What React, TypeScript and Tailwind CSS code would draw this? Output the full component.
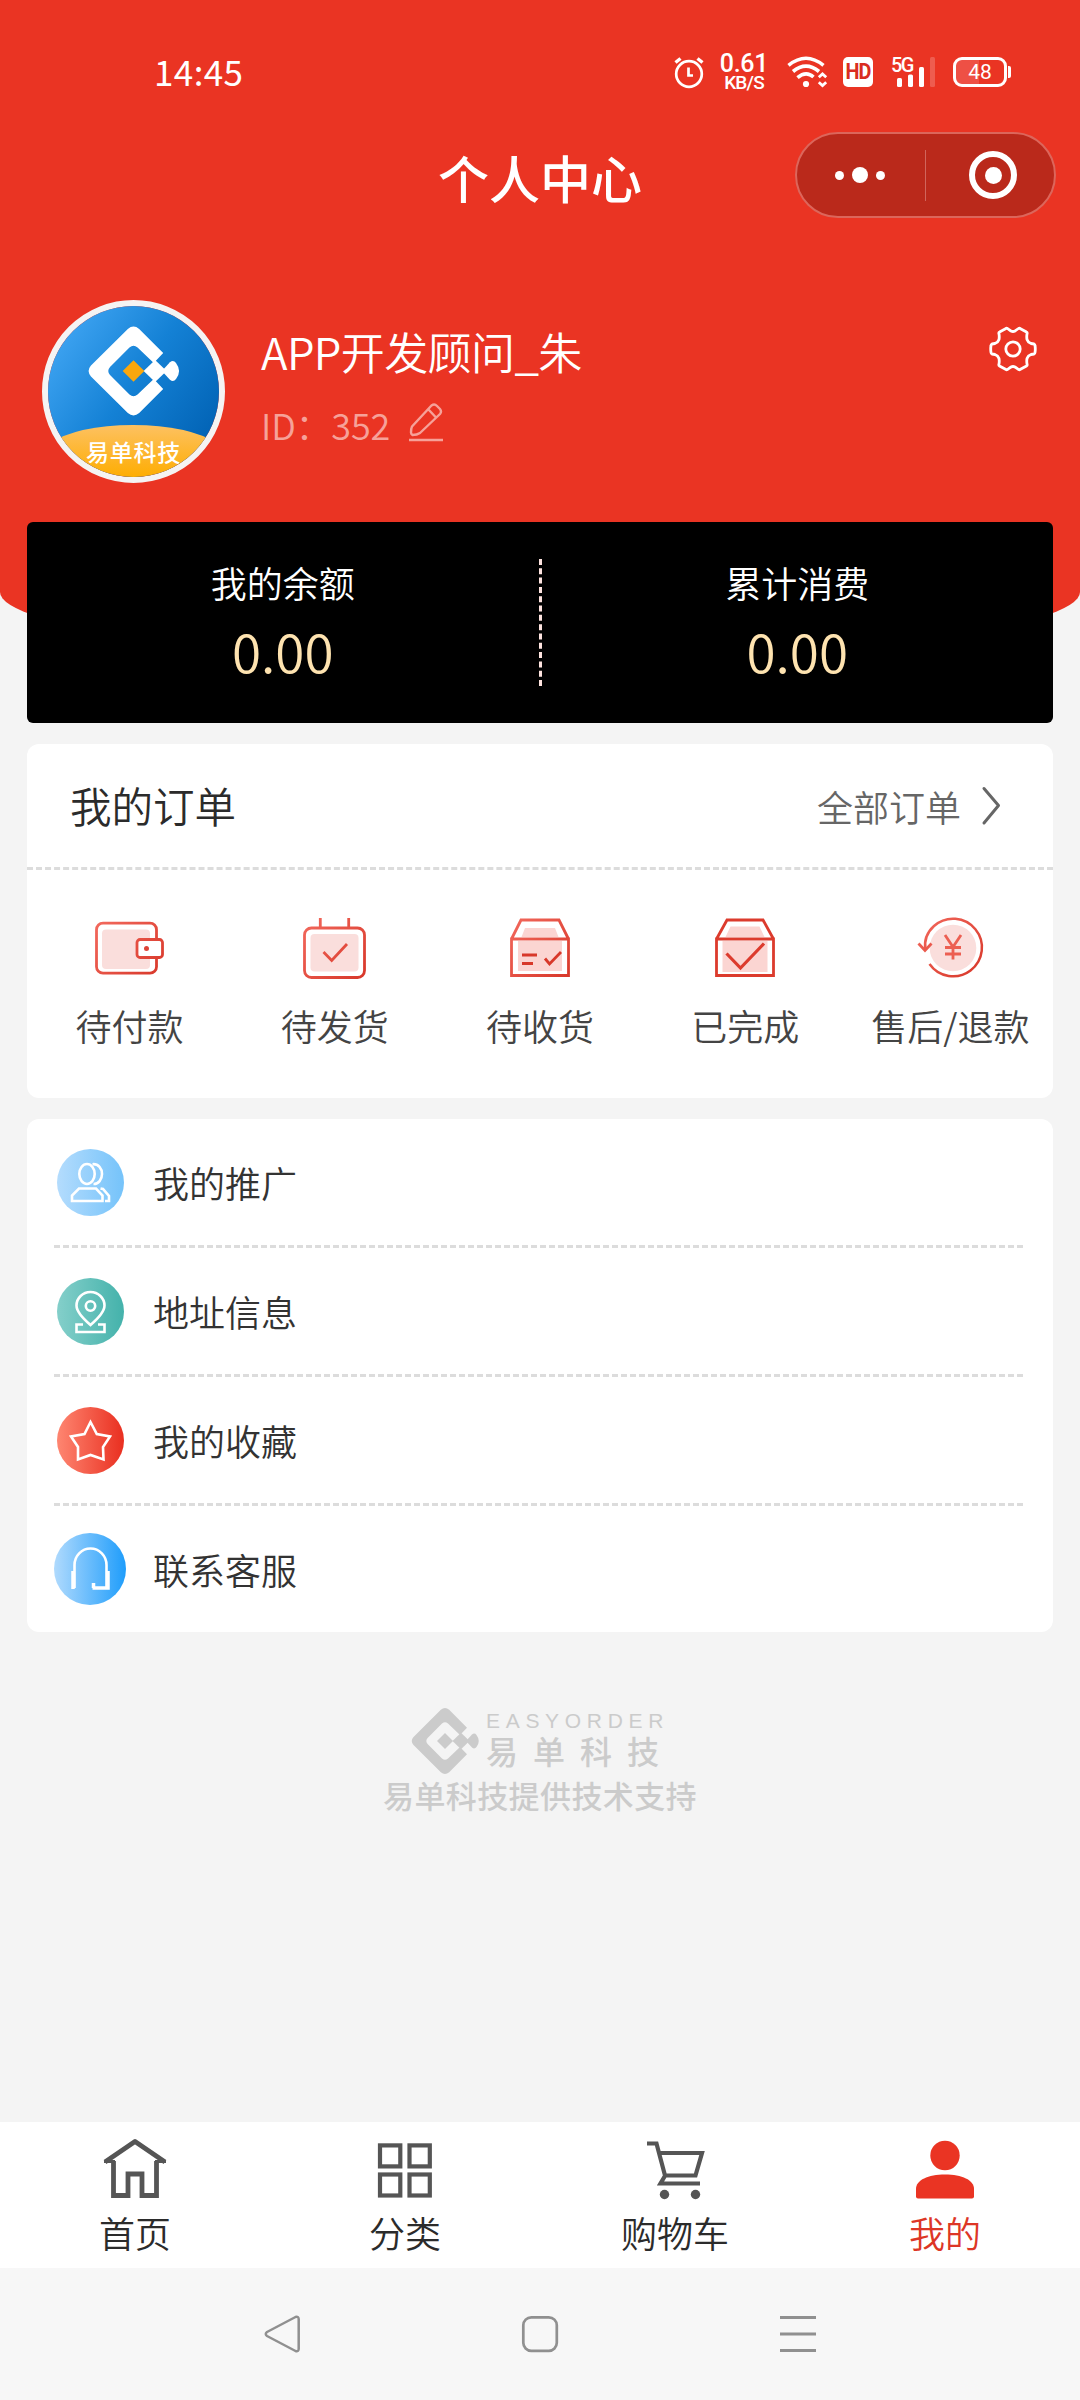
import React from "react";

const SANS = "font-['Noto_Sans_CJK_SC','Noto_Sans',sans-serif] font-[350]";

function BrandMark({ core }: { core: string }) {
  return (
    <>
      <path
        fill="currentColor"
        d="M22-13.3 4.2-31.2Q0-34.8-4.2-31.2L-31.5-4Q-35 0-31.5 4L-4.2 31.2Q0 34.8 4.2 31.2L22 13.3 15 6 3 17.4Q0 20 -3 17.4L-17.4 3Q-20 0-17.4-3L-3-17.4Q0-20 3-17.4L15-6Z"
      />
      <path fill="currentColor" d="M7.5 0 16-8.2 24.5 0 16 8.2Z" />
      <path fill="currentColor" d="M21 0 27-6.5Q29.500-8.600 31.500-6 36 0 31.500 6 29.500 8.600 27 6.500Z" />
      <path fill={core} d="M-8 0 0-8 8 0 0 8Z" />
    </>
  );
}

function StatusBar() {
  return (
    <div className="flex h-[132px] items-start justify-between pl-[154px] pr-[69px] pt-[53px] text-white">
      <span className="mt-[-1px] font-['Noto_Sans_CJK_SC'] text-[35px] font-normal leading-[38px] tracking-[0.4px]">14:45</span>
      <div className="flex h-[38px] items-center">
        <svg width="30" height="34" viewBox="0 0 30 34" fill="none" stroke="#fff">
          <circle cx="15" cy="19" r="12.8" strokeWidth="2.7" />
          <path d="M14.500 12.500V20.500H19" strokeWidth="2.7" />
          <path d="M1.500 7.500 6.500 3.500M28.500 7.500 23.500 3.500" strokeWidth="3.4" />
        </svg>
        <div className="ml-[17px] flex w-[46px] flex-col items-center font-['Roboto'] font-medium">
          <span className="text-[25px] leading-[20px] tracking-[-0.3px]">0.61</span>
          <span className="text-[19px] leading-[17px] tracking-[-0.8px]">KB/S</span>
        </div>
        <svg className="ml-[20px]" width="41" height="32" viewBox="0 0 41 32" fill="none" stroke="#fff" strokeWidth="3.6">
          <path d="M1.500 9.300Q19-4.800 36.500 9.300" />
          <path d="M6 15.500Q19 4.600 32 15.500" />
          <path d="M10.500 21.700Q19 14.400 26.500 21" />
          <circle cx="19" cy="28" r="3.100" fill="#fff" stroke="none" />
          <path d="M31.800 21.300 35.500 18 39.200 21.300M31.800 26.300 35.500 29.600 39.200 26.300" strokeWidth="2.8" />
        </svg>
        <div className="ml-[15px] flex h-[30px] w-[30px] items-center justify-center rounded-[5px] bg-white font-['Roboto'] text-[22px] font-bold leading-none tracking-[-1px] text-[#d92d20]">
          <span className="scale-x-[0.9]">HD</span>
        </div>
        <div className="relative ml-[18px] h-[30px] w-[46px]">
          <span className="absolute left-0 top-[-1px] font-['Roboto'] text-[20px] font-medium leading-[18px] tracking-[-1.5px]">5G</span>
          <svg className="absolute left-0 top-0" width="46" height="30" viewBox="0 0 46 30" fill="#fff">
            <rect x="6" y="21" width="5" height="9" rx="1.500" />
            <rect x="17" y="17.500" width="5" height="12.500" rx="1.500" />
            <rect x="28" y="10" width="5" height="20" rx="1.500" />
            <rect x="39" y="0" width="5" height="30" rx="1.500" opacity=".2" />
          </svg>
        </div>
        <div className="ml-[16px] flex items-center">
          <div className="flex h-[30px] w-[54px] items-center justify-center rounded-[9px] border-[3px] border-white bg-[linear-gradient(90deg,#ee5045_48%,transparent_48%)] font-['Roboto'] text-[21px] font-normal leading-none">
            48
          </div>
          <div className="ml-[1px] h-[12px] w-[3px] rounded-r-[2px] bg-white" />
        </div>
      </div>
    </div>
  );
}

function TitleBar() {
  return (
    <div className="relative flex h-[86px] items-center justify-center">
      <h1 className="pt-[3px] text-[51px] font-medium leading-[60px] text-white">个人中心</h1>
      <div className="absolute right-[24px] top-0 flex h-[86px] w-[261px] items-center rounded-full border-[2px] border-[#dc665b] bg-[#ba291b]">
        <div className="flex w-[128px] items-center justify-center gap-[8px] pr-[2px]">
          <i className="h-[9px] w-[9px] rounded-full bg-white" />
          <i className="h-[16px] w-[16px] rounded-full bg-white" />
          <i className="h-[9px] w-[9px] rounded-full bg-white" />
        </div>
        <div className="h-[51px] w-px bg-[#d0655c]" />
        <div className="flex flex-1 items-center justify-center pl-[6px]">
          <div className="flex h-[48px] w-[48px] items-center justify-center rounded-full border-[6px] border-white">
            <i className="h-[17px] w-[17px] rounded-full bg-white" />
          </div>
        </div>
      </div>
    </div>
  );
}

function Profile() {
  return (
    <div className="flex pl-[42px] pr-[43px] pt-[82px]">
      <div className="h-[183px] w-[183px] shrink-0 overflow-hidden rounded-full border-[6px] border-[#f5f3f3]">
        <svg width="171" height="171" viewBox="0 0 171 171">
          <defs>
            <linearGradient id="sky" x1="0" y1=".1" x2="1" y2=".8">
              <stop offset="0" stopColor="#45a9f6" />
              <stop offset=".5" stopColor="#1481d5" />
              <stop offset="1" stopColor="#0060b2" />
            </linearGradient>
            <linearGradient id="sun" x1="0" y1="0" x2="0" y2="1">
              <stop offset="0" stopColor="#fdc161" />
              <stop offset="1" stopColor="#fead02" />
            </linearGradient>
          </defs>
          <rect width="171" height="171" fill="url(#sky)" />
          <path d="M0 138Q30 119 85 119T171 138V171H0Z" fill="url(#sun)" />
          <g transform="translate(85.500 65) scale(1.350)" className="text-white">
            <BrandMark core="#fba70c" />
          </g>
          <text x="85.500" y="155" textAnchor="middle" fontSize="23" fontWeight="500" letterSpacing="0.700" fill="#fff">
            易单科技
          </text>
        </svg>
      </div>
      <div className="ml-[36px] flex flex-1 flex-col pt-[18px]">
        <span className="text-[44px] leading-[66px] tracking-[-0.6px] text-white">APP开发顾问_朱</span>
        <div className="flex items-center pt-[4px] text-[36px] leading-[72px] text-[#f6a199]">
          <span className="tracking-[-0.2px]">ID：352</span>
          <svg className="mb-[5px] ml-[18px]" width="36" height="40" viewBox="0 0 36 40" fill="none" stroke="currentColor" strokeWidth="2.400" strokeLinejoin="round">
            <path d="M4 24.500 23.500 3.500Q26.500 1.500 29 4L32 7Q34 9.500 32 12L12 31Q9 33 4.500 33 3 32 3 30.500 3 26.500 4 24.500ZM20.500 7.500 28 15.500" />
            <path d="M1 38H35" />
          </svg>
        </div>
      </div>
      <svg className="mr-[-1px] mt-[25px]" width="50" height="48" viewBox="-25 -24 50 48" fill="none" stroke="#fff" strokeWidth="2.800" strokeLinejoin="round">
        <path d="M-7-20.500Q-6.500-21-5.500-20.500Q-3.500-19-2-18 0-17 2-18 3.500-19 5.500-20.500 6.500-21 7-20.500L13.500-17Q14.500-16.500 14-15 13.500-12 14-9.500 15-6.500 18-5.500L21-5Q22-4.500 22-3.500 22.600 0 22 3.500 22 4.500 21 5L18 5.500Q15 6.500 14 9.500 13.500 12 14 15 14.500 16.500 13.500 17L7 20.500Q6.500 21 5.500 20.500 3.500 19 2 18 0 17-2 18-3.500 19-5.500 20.500-6.500 21-7 20.500L-13.500 17Q-14.500 16.500-14 15-13.500 12-14 9.500-15 6.500-18 5.500L-21 5Q-22 4.500-22 3.500-22.600 0-22-3.500-22-4.500-21-5L-18-5.500Q-15-6.500-14-9.500-13.500-12-14-15-14.500-16.500-13.500-17Z" />
        <circle r="7.200" />
      </svg>
    </div>
  );
}

function Balance({ label, value }: { label: string; value: string }) {
  return (
    <div className="flex flex-1 flex-col items-center pt-[38px]">
      <span className="text-[36px] leading-[44px] text-white">{label}</span>
      <span className="mt-[13px] text-[53px] leading-[66px] text-[#fee3b0]">{value}</span>
    </div>
  );
}

const line = { fill: "none", stroke: "url(#coral)", strokeWidth: 2.8 } as const;

function OrderIcon({ children }: { children: React.ReactNode }) {
  return (
    <svg width="72" height="64" viewBox="-36 -32 72 64">
      <defs>
        <linearGradient id="coral" gradientUnits="userSpaceOnUse" x1="-30" y1="-28" x2="30" y2="28">
          <stop offset="0" stopColor="#f2685c" />
          <stop offset="1" stopColor="#d8382a" />
        </linearGradient>
      </defs>
      {children}
    </svg>
  );
}

const orders = [
  {
    name: "待付款",
    icon: (
      <OrderIcon>
        <rect x="-28" y="-18.500" width="48" height="39.500" rx="4" fill="#fadedc" />
        <rect x="-33.500" y="-24.800" width="60" height="50" rx="6.500" {...line} />
        <rect x="7" y="-8.500" width="25.500" height="18" rx="3" {...line} fill="#fff" />
        <circle cx="16.500" cy="0.500" r="2.500" fill="#dd4437" />
      </OrderIcon>
    ),
  },
  {
    name: "待发货",
    icon: (
      <OrderIcon>
        <rect x="-24.500" y="-14" width="48" height="37.500" rx="4" fill="#fadedc" />
        <rect x="-30.500" y="-20" width="60" height="49.500" rx="7" {...line} />
        <path d="M-14.700-21V-30M13.700-21V-30M-11.500 4-3.300 12.500 12-4" {...line} />
      </OrderIcon>
    ),
  },
  {
    name: "待收货",
    icon: (
      <OrderIcon>
        <path d="M-18.500-11-15-20H15L18.500-11ZM-22-7H22V23H-22Z" fill="#fbd5d2" />
        <path d="M-28.500-9H28.500V27.500H-28.500ZM-28.500-9-19-28H19L28.500-9" {...line} />
        <path d="M-18 7H-3M-18 15.500H-7M5 10.500 9.500 16 21 4" {...line} stroke="#d8382a" />
      </OrderIcon>
    ),
  },
  {
    name: "已完成",
    icon: (
      <OrderIcon>
        <path d="M-19.500-11-14.500-21.500H14.500L19.500-11ZM-22.500-7H22.500V24H-22.500Z" fill="#fbd5d2" />
        <path d="M-28.500-9H28.500V27.500H-28.500ZM-28.500-9-18-28H18L28.500-9" {...line} stroke="#dc3b2d" />
        <path d="M-18.500 5.500-4.500 20 19-4.500" {...line} stroke="#dc3b2d" strokeWidth="3.200" />
      </OrderIcon>
    ),
  },
  {
    name: "售后/退款",
    icon: (
      <OrderIcon>
        <circle cx="3" r="23.300" fill="#fadedc" />
        <path d="M-24.500 2Q-27-12-16-22A28.800 28.800 0 1 1-20.500 16" {...line} strokeWidth="2.500" />
        <path d="M-31.500-4.500-25 2.500-18.500-4.500" {...line} />
        <path d="M-5-13 3-1 11-13M3-1V11.500M-5-.5H11M-5 6H11" {...line} stroke="#ec5f52" />
      </OrderIcon>
    ),
  },
];

function Orders() {
  return (
    <section className="mt-[21px] h-[354px] rounded-[12px] bg-white">
      <div className="flex h-[126px] items-center justify-between border-b-[3px] border-dashed border-[#dcdcdc] pl-[43px] pr-[50px]">
        <h2 className="mt-[-2px] text-[41.500px] leading-[50px] text-[#2b2b2b]">我的订单</h2>
        <div className="flex items-center">
          <span className="text-[36px] leading-[44px] text-[#666]">全部订单</span>
          <svg className="ml-[20px]" width="22" height="40" viewBox="0 0 22 40" fill="none" stroke="#666" strokeWidth="3" strokeLinecap="round" strokeLinejoin="round">
            <path d="M3 2.500 17.500 19.500 3 37" />
          </svg>
        </div>
      </div>
      <div className="grid grid-cols-5 pt-[46px]">
        {orders.map((o) => (
          <div key={o.name} className="flex flex-col items-center">
            {o.icon}
            <span className="mt-[23px] whitespace-nowrap text-[36px] leading-[44px] text-[#444]">{o.name}</span>
          </div>
        ))}
      </div>
    </section>
  );
}

function Disc({ id, from, to, size, children }: { id: string; from: string; to: string; size: number; children: React.ReactNode }) {
  return (
    <svg width={size} height={size} viewBox={`${-size / 2} ${-size / 2} ${size} ${size}`} fill="none" stroke="#fff" strokeWidth="2.600">
      <defs>
        <linearGradient id={id}>
          <stop offset="0" stopColor={from} />
          <stop offset="1" stopColor={to} />
        </linearGradient>
      </defs>
      <circle r={size / 2} fill={`url(#${id})`} stroke="none" />
      {children}
    </svg>
  );
}

const menu = [
  {
    name: "我的推广",
    icon: (
      <Disc id="promo" from="#b4dcfd" to="#75c3fa" size={67}>
        <ellipse cx="-3.500" cy="-8.500" rx="7.700" ry="10" />
        <path d="M2-18.300C8-18.800 11.500-14 11.500-8.500 11.500-3 8 1.700 3 1.500" />
        <path d="M-11.500 6H5.500L12 13V18.500H-18.500V13ZM10 6 12.500 6.500 18.500 13.500V18.500H14.500" />
      </Disc>
    ),
  },
  {
    name: "地址信息",
    icon: (
      <Disc id="place" from="#84cfca" to="#44b2ab" size={67}>
        <path d="M0 13.500C-7 7.500-14 .5-14-6A14 13.500 0 0 1 14-6C14 .5 7 7.500 0 13.500Z" />
        <circle cy="-5.500" r="4.700" />
        <path d="M-7.500 13H-14V20.500H14V13H7.500" />
      </Disc>
    ),
  },
  {
    name: "我的收藏",
    icon: (
      <Disc id="fav" from="#fe8671" to="#e92f20" size={67}>
        <path d="M0-18.500 6.300-6.500 19.500-4 12.500 6.500 13 19 0 14.500-12.500 19-12.500 6.500-19.500-4-6-6.500Z" />
      </Disc>
    ),
  },
  {
    name: "联系客服",
    icon: (
      <Disc id="service" from="#b0dafd" to="#1f9dfb" size={72}>
        <path d="M-15.500 19V-4A15.500 16 0 0 1 16.500-4V19" />
        <path d="M-17 2V20M18 2V19H2.500M3.500 14V19" strokeWidth="3.500" />
      </Disc>
    ),
  },
];

function Menu() {
  return (
    <section className="mt-[21px] rounded-[12px] bg-white pl-[27px] pr-[30px]">
      {menu.map((m) => (
        <div key={m.name} className="flex h-[129px] items-center border-b-[3px] border-dashed border-[#dcdcdc] last:h-[126px] last:border-b-0">
          <div className="flex w-[72px] justify-center">{m.icon}</div>
          <span className="ml-[27px] text-[36px] leading-[44px] text-[#333]">{m.name}</span>
        </div>
      ))}
    </section>
  );
}

function Credit() {
  return (
    <div className="mt-[74px] flex flex-col items-center text-[#cbcbcb]">
      <div className="flex h-[68px] w-[258px] items-start">
        <svg className="shrink-0" width="69" height="70" viewBox="-34 -35 69 70">
          <BrandMark core="currentColor" />
        </svg>
        <div className="flex flex-col pl-[6px] pt-[5px]">
          <span className="whitespace-nowrap font-['Liberation_Sans'] text-[21px] font-normal leading-[20px] tracking-[5.7px]">EASYORDER</span>
          <span className="whitespace-nowrap text-[32px] font-medium leading-[39px] tracking-[15px]">易单科技</span>
        </div>
      </div>
      <span className="mt-[2px] text-[31px] font-medium leading-[38px] tracking-[0.4px]">易单科技提供技术支持</span>
    </div>
  );
}

const tabs = [
  {
    name: "首页",
    icon: (
      <g fill="none" stroke="#555" strokeWidth="4.800">
        <path d="M-21.500-9V25.500H-7V4H7V25.500H21.500V-9" />
        <path d="M-30-8 0-28.500 30-8" strokeLinejoin="round" />
        <path d="M-31-8.500H-20M31-8.500H20" strokeWidth="3" />
      </g>
    ),
  },
  {
    name: "分类",
    icon: (
      <g fill="none" stroke="#555" strokeWidth="4.200">
        <rect x="-25" y="-24.600" width="20.300" height="21" />
        <rect x="4.500" y="-24.600" width="20.300" height="21" />
        <rect x="-25" y="4.500" width="20.300" height="21" />
        <rect x="4.500" y="4.500" width="20.300" height="21" />
      </g>
    ),
  },
  {
    name: "购物车",
    icon: (
      <g fill="none" stroke="#555" strokeWidth="4.200">
        <path d="M-28-26.500H-18.500L-10 5.500H20.500L27-17H-15.500M-9.500 5-14.500 13.500H25" />
        <circle cx="-10.500" cy="24.500" r="4.700" fill="#555" stroke="none" />
        <circle cx="20.500" cy="24.500" r="4.700" fill="#555" stroke="none" />
      </g>
    ),
  },
  {
    name: "我的",
    active: true,
    icon: (
      <g fill="#ea3423">
        <circle cy="-14.500" r="14.700" />
        <path d="M-29 19C-29 10-17 4.500 0 4.500S29 10 29 19V26.500Q29 28.500 27 28.500H-27Q-29 28.500-29 26.500Z" />
      </g>
    ),
  },
];

function TabBar() {
  return (
    <nav className="grid h-[146px] shrink-0 grid-cols-4 bg-white">
      {tabs.map((t) => (
        <div key={t.name} className="flex flex-col items-center pt-[16px]">
          <svg width="68" height="64" viewBox="-34 -32 68 64">
            {t.icon}
          </svg>
          <span className={t.active ? "mt-[8px] text-[36px] leading-[44px] text-[#dd3626]" : "mt-[8px] text-[36px] leading-[44px] text-[#2b2b2b]"}>{t.name}</span>
        </div>
      ))}
    </nav>
  );
}

function SystemNav() {
  return (
    <div className="flex h-[132px] shrink-0 items-center justify-center gap-[218px] bg-[#f7f7f7]">
      <svg width="40" height="40" viewBox="0 0 40 40" fill="none" stroke="#909090" strokeWidth="2.500" strokeLinejoin="round">
        <path d="M33.500 3Q36.500 2 36.700 5V35Q36.500 38 33.500 37L5 22Q2.500 20 5 18Z" />
      </svg>
      <svg width="40" height="40" viewBox="0 0 40 40" fill="none" stroke="#909090" strokeWidth="2.700">
        <rect x="3.300" y="3.300" width="33.500" height="33.500" rx="8" />
      </svg>
      <svg width="40" height="40" viewBox="0 0 40 40" stroke="#909090" strokeWidth="3">
        <path d="M2 3.500H38M2 20H38M2 36.500H38" />
      </svg>
    </div>
  );
}

export default function App() {
  return (
    <div className={`${SANS} flex h-[2400px] w-[1080px] flex-col overflow-hidden bg-[#f4f4f4]`}>
      <header className="h-[659px] shrink-0 rounded-b-[540px_67px] bg-[#ea3423]">
        <StatusBar />
        <TitleBar />
        <Profile />
      </header>
      <main className="relative mt-[-137px] flex-1 px-[27px]">
        <section className="flex h-[201px] items-start rounded-[6px] bg-black">
          <Balance label="我的余额" value="0.00" />
          <div className="mt-[37px] h-[127px] w-0 border-l-[3px] border-dashed border-[#fde3df]" />
          <Balance label="累计消费" value="0.00" />
        </section>
        <Orders />
        <Menu />
        <Credit />
      </main>
      <TabBar />
      <SystemNav />
    </div>
  );
}
